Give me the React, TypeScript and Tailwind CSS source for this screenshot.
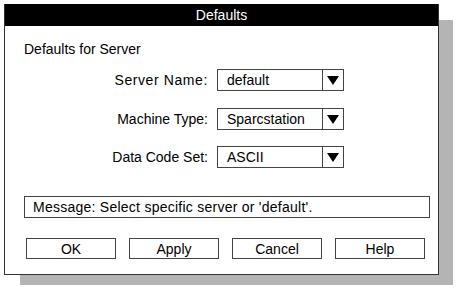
import React from "react";

const font = { fontFamily: '"Liberation Sans", Arial, sans-serif' };

function Arrow() {
  return (
    <svg width="12" height="9" viewBox="0 0 12 9">
      <polygon points="0,0 12,0 6,9" fill="#000" />
    </svg>
  );
}

function Row({ label, value, mt, labelClass = "" }: { label: string; value: string; mt: string; labelClass?: string }) {
  return (
    <div className={`flex items-center ${mt}`}>
      <div className={`w-[203px] text-right text-[14px] leading-[16px] text-black ${labelClass}`}>{label}</div>
      <div className="ml-[9px] flex h-[22px] w-[127px] border border-[#444]">
        <div className="flex flex-1 items-center pl-[9px] text-[14px] leading-[16px] text-black">{value}</div>
        <div className="flex w-[21px] items-center justify-center border-l border-[#444]">
          <Arrow />
        </div>
      </div>
    </div>
  );
}

function Btn({ label }: { label: string }) {
  return (
    <div className="flex h-[21px] w-[90px] items-center justify-center border border-[#444] text-[14px] leading-[16px] text-black">
      {label}
    </div>
  );
}

export default function App() {
  return (
    <div className="relative h-[291px] w-[459px] overflow-hidden bg-white pl-[4px] pt-[4px]" style={font}>
      <div className="absolute left-[20px] top-[20px] h-[265px] w-[433px] bg-[#b4b4b4]" />
      <div className="relative flex h-[271px] w-[435px] flex-col border-x border-b border-[#333] bg-white">
        <div className="flex h-[22px] items-center justify-center bg-black text-[14px] leading-[16px] text-white">
          Defaults
        </div>
        <div className="ml-[19px] mt-[15px] text-[14px] leading-[16px] text-black">Defaults for Server</div>
        <Row label="Server Name:" value="default" mt="mt-[12px]" labelClass="tracking-[0.6px]" />
        <Row label="Machine Type:" value="Sparcstation" mt="mt-[17px]" />
        <Row label="Data Code Set:" value="ASCII" mt="mt-[16px]" />
        <div className="ml-[19px] mt-[28px] flex h-[22px] w-[406px] items-center border border-[#444] pl-[8px] text-[14px] leading-[16px] tracking-[0.25px] text-black">
          Message: Select specific server or 'default'.
        </div>
        <div className="ml-[21px] mt-[20px] flex gap-[13px]">
          <Btn label="OK" />
          <Btn label="Apply" />
          <Btn label="Cancel" />
          <Btn label="Help" />
        </div>
      </div>
    </div>
  );
}
